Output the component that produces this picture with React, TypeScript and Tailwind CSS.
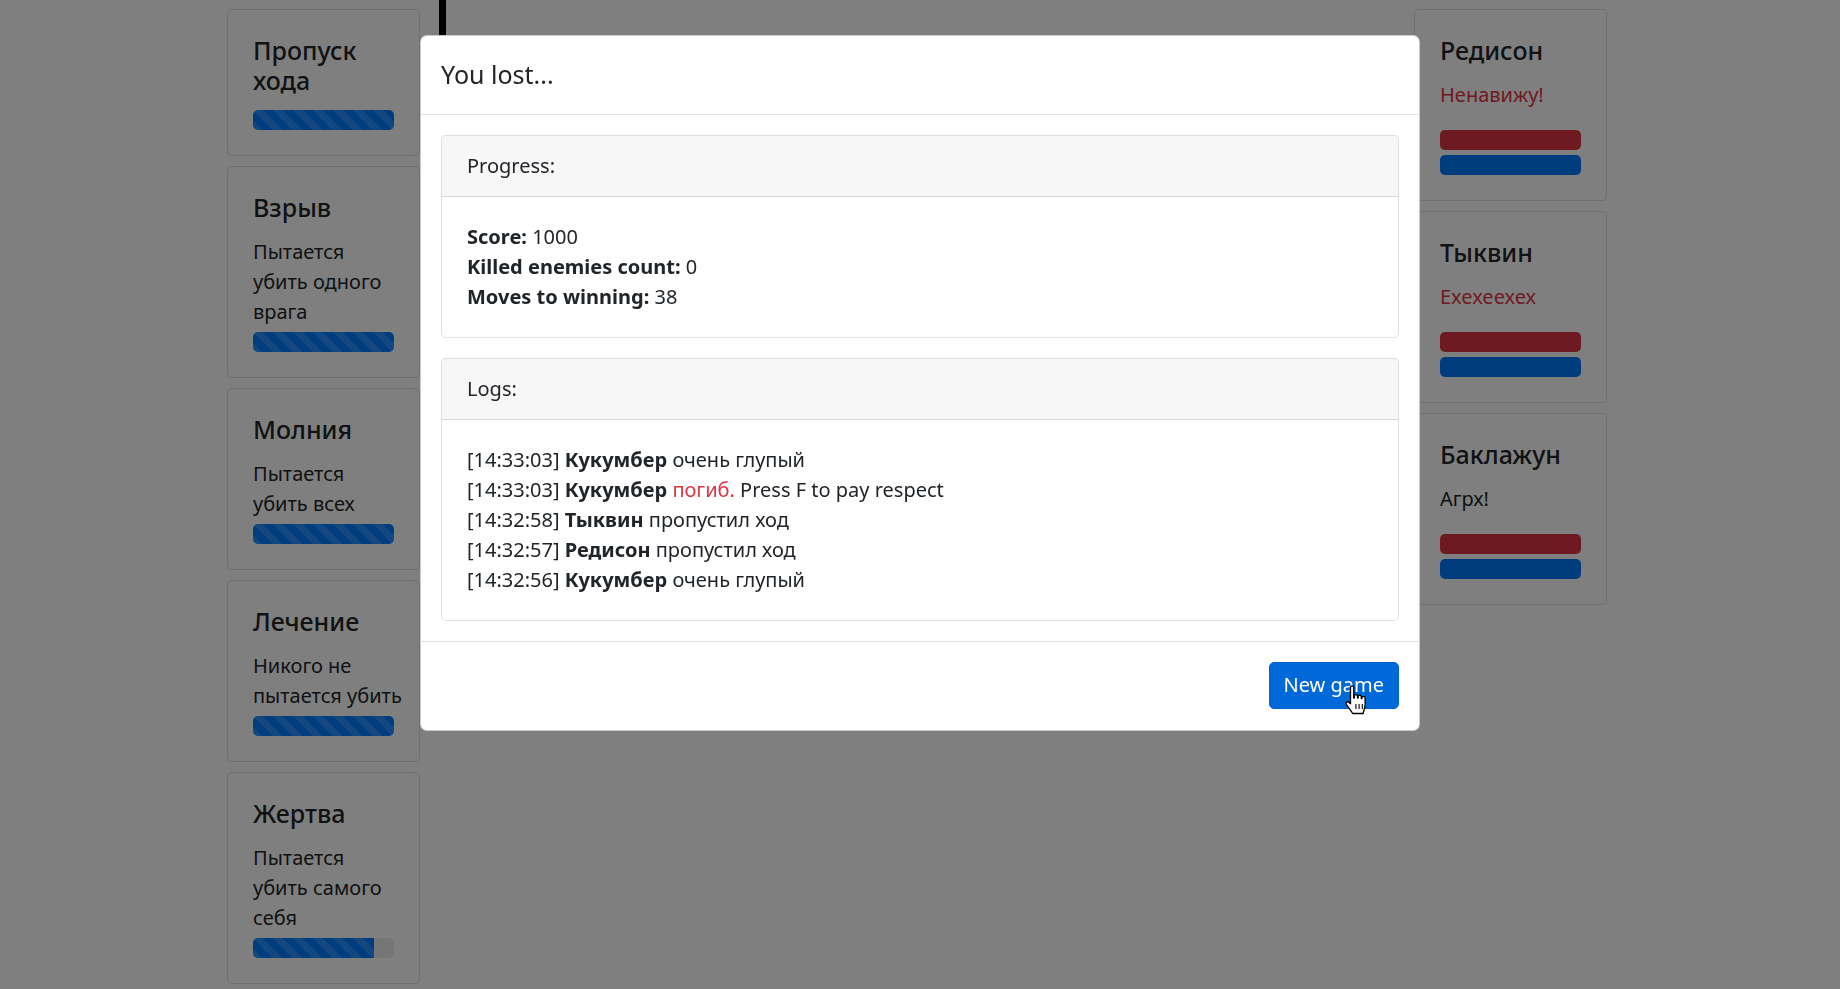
import { ReactNode } from "react";

const stripes =
  "bg-[#007bff] bg-[linear-gradient(45deg,rgba(255,255,255,.15)_25%,transparent_25%,transparent_50%,rgba(255,255,255,.15)_50%,rgba(255,255,255,.15)_75%,transparent_75%,transparent)] bg-[length:20px_20px]";

const skills = [
  { title: "Пропуск хода", text: [] as string[], value: 100 },
  { title: "Взрыв", text: ["Пытается", "убить одного", "врага"], value: 100 },
  { title: "Молния", text: ["Пытается", "убить всех"], value: 100 },
  { title: "Лечение", text: ["Никого не", "пытается убить"], value: 100 },
  { title: "Жертва", text: ["Пытается", "убить самого", "себя"], value: 86 },
];

const enemies = [
  { name: "Редисон", phrase: "Ненавижу!", angry: true },
  { name: "Тыквин", phrase: "Exexeexex", angry: true },
  { name: "Баклажун", phrase: "Агрх!", angry: false },
];

const logs = [
  { time: "14:33:03", who: "Кукумбер", rest: "очень глупый" },
  { time: "14:33:03", who: "Кукумбер", dead: true, rest: "Press F to pay respect" },
  { time: "14:32:58", who: "Тыквин", rest: "пропустил ход" },
  { time: "14:32:57", who: "Редисон", rest: "пропустил ход" },
  { time: "14:32:56", who: "Кукумбер", rest: "очень глупый" },
];

function Bar({ value, striped, color }: { value: number; striped?: boolean; color?: string }) {
  return (
    <div className="flex h-[20px] overflow-hidden rounded-[5px] bg-[#e9ecef]">
      <div className={striped ? stripes : color} style={{ width: `${value}%` }} />
    </div>
  );
}

function SkillCard({ title, text, value }: { title: string; text: string[]; value: number }) {
  return (
    <div className="rounded-[5px] border border-black/[.125] bg-white p-[25px]">
      <h5 className="mb-[15px] text-[25px] leading-[1.2] font-medium">{title}</h5>
      {text.length > 0 && (
        <p className="mb-[5px]">
          {text.map((line) => (
            <span key={line} className="block whitespace-nowrap">
              {line}
            </span>
          ))}
        </p>
      )}
      <Bar value={value} striped />
    </div>
  );
}

function EnemyCard({ name, phrase, angry }: { name: string; phrase: string; angry: boolean }) {
  return (
    <div className="rounded-[5px] border border-black/[.125] bg-white p-[25px]">
      <h5 className="mb-[15px] text-[25px] leading-[1.2] font-medium">{name}</h5>
      <p className={angry ? "mb-[20px] text-[#dc3545]" : "mb-[20px]"}>{phrase}</p>
      <Bar value={100} color="bg-[#dc3545]" />
      <div className="mt-[5px]">
        <Bar value={100} color="bg-[#007bff]" />
      </div>
    </div>
  );
}

function Panel({ header, children }: { header: string; children: ReactNode }) {
  return (
    <div className="rounded-[5px] border border-black/[.125] bg-white">
      <div className="rounded-t-[5px] border-b border-black/[.125] bg-black/[.03] px-[25px] py-[15px]">{header}</div>
      <div className="p-[25px]">{children}</div>
    </div>
  );
}

function HandCursor() {
  return (
    <svg
      width="24"
      height="32"
      viewBox="0 0 24 32"
      className="pointer-events-none absolute left-[74px] top-[22px]"
    >
      <path
        d="M6.5 2.5a1.6 1.6 0 0 1 3.2 0V13h.6v-1.8a1.6 1.6 0 0 1 3.2 0V13h.6v-1.2a1.6 1.6 0 0 1 3.2 0V13.5h.6v-.6a1.6 1.6 0 0 1 3.2 0v6.6c0 3.6-1.6 6.2-1.9 9H8.6c-1-2.2-4.3-6.4-6.2-9.1-1.1-1.6.6-3.4 2.3-2.2l1.8 1.5Z"
        fill="white"
        stroke="black"
        strokeWidth="1.3"
        strokeLinejoin="round"
      />
      <path d="M11.9 19v5M15.1 19v5M18.3 19v5" stroke="black" strokeWidth="1.1" />
    </svg>
  );
}

export default function App() {
  return (
    <div className="relative min-h-screen bg-white font-['Noto_Sans',sans-serif] text-[20px] leading-[1.5] text-[#212529]">
      <div className="flex items-start pt-[9px] pl-[227px] pr-[233px]">
        <div className="flex w-[193px] flex-col gap-[10px]">
          {skills.map((s) => (
            <SkillCard key={s.title} {...s} />
          ))}
        </div>
        <div className="-mt-[9px] flex-1 pl-[19px]">
          <div className="h-[80px] w-[7px] bg-black" />
        </div>
        <div className="flex w-[193px] flex-col gap-[10px]">
          {enemies.map((e) => (
            <EnemyCard key={e.name} {...e} />
          ))}
        </div>
      </div>

      <div className="fixed inset-0 bg-black/50" />

      <div className="fixed inset-0 overflow-y-auto">
        <div className="mx-auto mt-[35px] w-[1000px] rounded-[7px] border border-black/20 bg-white">
          <div className="border-b border-[#dee2e6] p-[20px]">
            <h5 className="text-[25px] leading-[1.5]">You lost...</h5>
          </div>

          <div className="flex flex-col gap-[20px] p-[20px]">
            <Panel header="Progress:">
              <div>
                <b>Score:</b> 1000
              </div>
              <div>
                <b>Killed enemies count:</b> 0
              </div>
              <div>
                <b>Moves to winning:</b> 38
              </div>
            </Panel>

            <Panel header="Logs:">
              {logs.map((l, i) => (
                <div key={i}>
                  [{l.time}] <b>{l.who}</b>{" "}
                  {l.dead && <span className="text-[#dc3545]">погиб.</span>} {l.rest}
                </div>
              ))}
            </Panel>
          </div>

          <div className="flex justify-end border-t border-[#dee2e6] px-[15px] pt-[15px] pb-[16px]">
            <button className="relative m-[5px] h-[47px] rounded-[5px] border border-[#0062cc] bg-[#0069d9] px-[14px] leading-[1.5] text-white">
              New game
              <HandCursor />
            </button>
          </div>
        </div>
      </div>
    </div>
  );
}
